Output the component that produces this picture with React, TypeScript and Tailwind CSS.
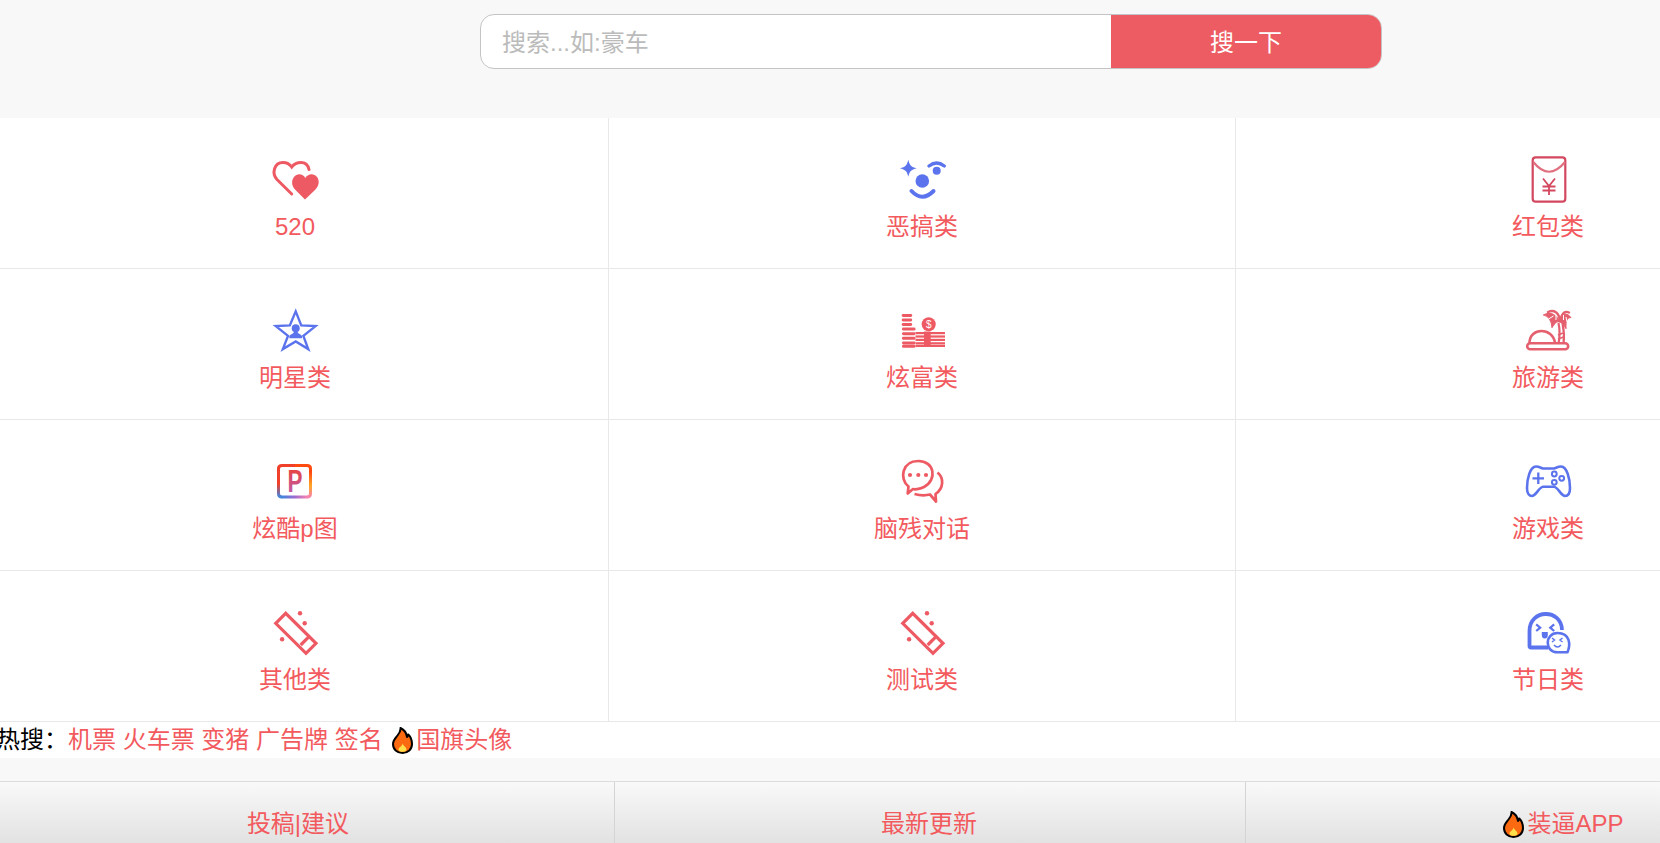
const BLUE = "#5b73ec";
const RED = "#ee5a63";

function Svg({ children }: { children: React.ReactNode }) {
  return (
    <svg width="48" height="48" viewBox="0 0 48 48" fill="none">
      {children}
    </svg>
  );
}

function HeartIcon() {
  return (
    <Svg>
      <path d="M20.7 39 L6 24.5 C0.5 18.5 3 7.5 12 7.5 C16 7.5 19 9.5 20.7 12 C23 9 26 7.5 30 7.5 C34 7.5 37 10 38 14.5" stroke={RED} strokeWidth="3" strokeLinecap="round" />
      <path d="M34 44.5 L24.5 35 C20 30.5 20.5 25 23 22 C26 18 32 18.5 34.3 23 C37 18.5 43 18 46 22 C48.5 25 48.5 30.5 44 35 Z" fill={RED} />
    </Svg>
  );
}

function ClownIcon() {
  return (
    <Svg>
      <path d="M10.3 4.8 C11.5 10 13 12.2 18.8 13.3 C13 14.6 11.5 16.6 10.3 21.8 C9.1 16.6 7.6 14.6 1.8 13.3 C7.6 12.2 9.1 10 10.3 4.8 Z" fill={BLUE} />
      <circle cx="24.3" cy="26" r="6.8" fill={BLUE} />
      <circle cx="38.7" cy="15.7" r="4" fill={BLUE} />
      <path d="M31 11 Q38.7 5 46.3 11" stroke={BLUE} strokeWidth="3.2" strokeLinecap="round" />
      <path d="M13.5 36 Q24.3 47.5 35.5 36" stroke={BLUE} strokeWidth="4" strokeLinecap="round" />
    </Svg>
  );
}

function PacketIcon() {
  return (
    <Svg>
      <rect x="8.7" y="2.3" width="32.6" height="44.4" rx="3" stroke="#d3475f" strokeWidth="2.2" />
      <path d="M9.3 7 Q25 26.5 41 7" stroke="#e0707f" strokeWidth="2.2" />
      <path d="M19 23.5 L25 31 L31 23.5 M18.5 31.5 H31.5 M18.5 35.5 H31.5 M25 31 V40" stroke="#d3475f" strokeWidth="1.8" />
    </Svg>
  );
}

function StarIcon() {
  return (
    <Svg>
      <g transform="translate(2 2.6) scale(0.92)">
        <path d="M24.7 3 L30.7 18.3 L46.3 19 L33 29.7 L38.3 44 L24.7 35.7 L10.7 44 L16.3 29.7 L3 19 L18.3 18.3 Z" stroke={BLUE} strokeWidth="2.6" />
      </g>
      <circle cx="24.7" cy="22.3" r="4" fill={BLUE} />
      <path d="M18.3 32.3 V30 C20 28 22 28 23 26 H26.5 C27.5 28 29.5 28 31 30 V32.3 Z" fill={BLUE} />
    </Svg>
  );
}

function CoinsIcon() {
  const left = [8, 12.5, 17, 21.6, 26.2, 30.8, 35.4, 38.8];
  const right = [26, 29.4, 32.8, 36.2, 38.8];
  return (
    <Svg>
      {left.map((y, i) => (
        <rect key={y} x={i < 3 ? 3.7 : 4} y={y} width={i < 3 ? 10.5 : 13.5} height="3" rx="1.4" fill={RED} />
      ))}
      <circle cx="30.7" cy="18.3" r="7" fill={RED} />
      <text x="30.7" y="22" textAnchor="middle" fontSize="10" fill="#fff" fontFamily="Liberation Sans, sans-serif">$</text>
      {right.map((y) => (
        <rect key={y} x="17.5" y={y} width="29.5" height="2.2" fill={RED} />
      ))}
      <rect x="26" y="25.5" width="6.7" height="15.5" fill={RED} />
    </Svg>
  );
}

function PalmIcon() {
  const c = "#e5606f";
  return (
    <Svg>
      <rect x="3.2" y="37.3" width="41" height="6" rx="3" stroke={c} strokeWidth="2.6" />
      <path d="M5.5 37 C5.5 21 29 21 31 37" stroke={c} strokeWidth="2.6" />
      <path d="M34.5 38 C36 30 36 24 34.5 17 M39.5 38 C40.5 30 40 24 38.5 17" stroke={c} strokeWidth="2.2" />
      <path d="M36 16 C31 7 25 6 19.5 9 C25 10 27.5 14 28 21.5 C30.5 16.5 33 14.5 36 16 Z" fill={c} stroke={c} strokeWidth="1.2" strokeLinejoin="round" />
      <path d="M36 16 C37 8 42 5.5 46.8 11.5 C42.5 11.5 41.5 15 42 22.5 C40 18.5 38 16.5 36 16 Z" fill={c} stroke={c} strokeWidth="1.2" strokeLinejoin="round" />
      <path d="M24 6 C30 3.5 35 6 36 15 C38 7 41 4.5 45 6.5" stroke={c} strokeWidth="2.4" strokeLinecap="round" />
      <path d="M24.5 13 L29.5 10 M32 14 L32 9 M39.5 14 L39.5 9 M43 16 L42 11" stroke="#fff" strokeWidth="1" />
      <path d="M34 29 L39 27 M34 33 L39.5 31" stroke={c} strokeWidth="1.6" />
    </Svg>
  );
}

function PhotoIcon() {
  return (
    <Svg>
      <defs>
        <linearGradient id="pLeft" x1="0" y1="0" x2="0" y2="1">
          <stop offset="0.35" stopColor="#f0402a" />
          <stop offset="1" stopColor="#3f86e0" />
        </linearGradient>
        <linearGradient id="pRight" x1="0" y1="0" x2="0" y2="1">
          <stop offset="0" stopColor="#ff4a10" />
          <stop offset="0.55" stopColor="#ffa526" />
          <stop offset="1" stopColor="#f884b0" />
        </linearGradient>
        <linearGradient id="pBottom" x1="0" y1="0" x2="1" y2="0">
          <stop offset="0" stopColor="#3f86e0" />
          <stop offset="0.5" stopColor="#9a6bd0" />
          <stop offset="1" stopColor="#f884b0" />
        </linearGradient>
        <linearGradient id="pLetter" x1="0" y1="0" x2="0" y2="1">
          <stop offset="0" stopColor="#f0402a" />
          <stop offset="1" stopColor="#b45fc4" />
        </linearGradient>
      </defs>
      <path d="M7.5 24 V11.5 Q7.5 8.5 11 8.5 H24" stroke="#f0402a" strokeWidth="3" />
      <path d="M24 8.5 H36 Q39.5 8.5 39.5 11.5 V24" stroke="#ff4a10" strokeWidth="3" />
      <path d="M7.5 20 V36.5 Q7.5 40 11 40" stroke="url(#pLeft)" strokeWidth="3" />
      <path d="M39.5 15 V36.5 Q39.5 40 36 40" stroke="url(#pRight)" strokeWidth="3" />
      <rect x="10.5" y="38.5" width="26" height="3" fill="url(#pBottom)" />
      <text x="24" y="35" textAnchor="middle" fontSize="31" fontWeight="700" fontFamily="Liberation Sans, sans-serif" fill="url(#pLetter)" textLength="15" lengthAdjust="spacingAndGlyphs">P</text>
    </Svg>
  );
}

function ChatIcon() {
  return (
    <Svg>
      <path d="M9.7 36.5 L10.5 29.5 C1 22 4 4 20.3 4 C36 4 40 22 26 30 C21 32.5 16 32.5 15 32 Z" stroke={RED} strokeWidth="2.7" strokeLinejoin="round" />
      <path d="M16.5 37 C22 38.5 28 38.5 32 37.5 L38 44.5 L37.5 37 C46 31 46 21 39.5 15.5" stroke={RED} strokeWidth="2.7" strokeLinejoin="round" />
      <circle cx="12" cy="18" r="2.1" fill={RED} />
      <circle cx="20.3" cy="18" r="2.1" fill={RED} />
      <circle cx="28" cy="18" r="2.1" fill={RED} />
    </Svg>
  );
}

function GameIcon() {
  return (
    <Svg>
      <path d="M12 9.5 C15 9.5 17 11 19 11.5 H30 C32 11 34 9.5 37 9.5 C43 9.5 46 22 46 31 C46 37 43.5 39 41 39 C37 39 34 30 30 29.7 H19 C15 30 12 39 8 39 C5.5 39 3 37 3 31 C3 22 6 9.5 12 9.5 Z" stroke={BLUE} strokeWidth="2.6" strokeLinejoin="round" />
      <path d="M14.3 15.5 V27 M8.5 21.3 H20" stroke={BLUE} strokeWidth="2.3" />
      <circle cx="30.3" cy="17" r="2.4" stroke={BLUE} strokeWidth="2" />
      <circle cx="37.7" cy="21.3" r="2.4" stroke={BLUE} strokeWidth="2" />
      <circle cx="30.3" cy="25.3" r="2.4" stroke={BLUE} strokeWidth="2" />
    </Svg>
  );
}

function WandIcon() {
  return (
    <Svg>
      <path d="M4.7 15.3 L14.7 5.3 L45 35.3 L35 45.3 Z" stroke={RED} strokeWidth="3.2" />
      <path d="M29.7 37 L39 27.7" stroke={RED} strokeWidth="3.2" />
      <circle cx="29" cy="5.3" r="2.2" fill={RED} />
      <circle cx="33.7" cy="15.3" r="2.2" fill={RED} />
      <circle cx="11.1" cy="31.3" r="2.2" fill={RED} />
    </Svg>
  );
}

function GhostIcon() {
  return (
    <Svg>
      <g transform="translate(-1.5 0)">
        <path d="M26 39.5 H8.5 Q7 39.5 7 38 V23 C7 0.5 39 0.5 39.5 22" stroke={BLUE} strokeWidth="3.8" />
        <path d="M13.7 16.3 L17.7 19.7 L13.7 23 M31.7 16.3 L27.7 19.7 L31.7 23" stroke={BLUE} strokeWidth="2.2" />
        <path d="M19.3 24 H25.3 V27 Q25.3 30.5 22.3 30.5 Q19.3 30.5 19.3 27 Z" fill={BLUE} />
        <path d="M45 44.3 H35 C22 44.3 22 25 35 25 C48 25 48 37 45 44.3 Z" fill="#fff" stroke={BLUE} strokeWidth="2.6" strokeLinejoin="round" />
        <path d="M29.5 30 L32 32 L29.5 34 M40 30 L37.5 32 L40 34" stroke={BLUE} strokeWidth="1.5" />
        <path d="M31.5 37 Q35 41 38.5 37" stroke={BLUE} strokeWidth="1.5" />
      </g>
    </Svg>
  );
}

function Flame() {
  return (
    <svg width="21" height="27" viewBox="0 0 21 27" className="inline-block align-[-6px]">
      <path d="M8.5 1 C13 3 14.5 6 15 10 C15.8 9.3 16.2 8.5 16.3 7.5 C18.8 10 20 13 20 17 C20 22.5 16 26 10.5 26 C5 26 1 22.5 1 17 C1 13 3.5 11 5.5 8.5 C7.5 6 9 4 8.5 1 Z" fill="#fb6a10" stroke="#000" strokeWidth="2" strokeLinejoin="round" />
      <path d="M10.8 16.5 C11 19 14.5 20 14.5 22.5 C14.5 24 12.5 24.8 10.5 24.8 C8.5 24.8 6.5 24 6.5 22.5 C6.5 20.5 9.8 19.5 10.8 16.5 Z" fill="#ffe04a" />
    </svg>
  );
}

const items = [
  { label: "520", icon: <HeartIcon /> },
  { label: "恶搞类", icon: <ClownIcon /> },
  { label: "红包类", icon: <PacketIcon /> },
  { label: "明星类", icon: <StarIcon /> },
  { label: "炫富类", icon: <CoinsIcon /> },
  { label: "旅游类", icon: <PalmIcon /> },
  { label: "炫酷p图", icon: <PhotoIcon /> },
  { label: "脑残对话", icon: <ChatIcon /> },
  { label: "游戏类", icon: <GameIcon /> },
  { label: "其他类", icon: <WandIcon /> },
  { label: "测试类", icon: <WandIcon /> },
  { label: "节日类", icon: <GhostIcon /> },
];

const hot = ["机票", "火车票", "变猪", "广告牌", "签名"];

export default function App() {
  return (
    <div className="h-[843px] overflow-hidden bg-[#f8f8f8] font-['Liberation_Sans','Noto_Sans_CJK_SC',sans-serif] text-[24px] text-[#f25a5e]">
      <div className="h-[118px] pt-[14px] pl-[480px]">
        <form className="flex h-[55px] w-[902px] overflow-hidden rounded-[14px] border border-[#c4c4c4] bg-white">
          <input
            placeholder="搜索...如:豪车"
            className="min-w-0 flex-1 pt-[2px] pl-[21px] text-[24px] outline-none placeholder:text-[#bbbbbb]"
          />
          <button type="button" className="w-[270px] bg-[#ec5c62] pt-[2px] text-[24px] text-white">
            搜一下
          </button>
        </form>
      </div>

      <div className="-ml-[18px] grid w-[1879px] grid-cols-[627px_627px_625px] bg-white">
        {items.map((item) => (
          <a
            key={item.label}
            className="flex h-[151px] flex-col items-center border-r border-b border-[#e8e8e8] pt-[37px]"
          >
            {item.icon}
            <span className="leading-[47px]">{item.label}</span>
          </a>
        ))}
      </div>

      <div className="h-[36px] whitespace-pre bg-white -indent-[4px] leading-[36px]">
        <span className="text-black">热搜：</span>
        {hot.map((h) => (
          <a key={h}>{h} </a>
        ))}
        <a className="ml-[3px]">
          <Flame />
          <span className="ml-[3px]">国旗头像</span>
        </a>
      </div>

      <div className="mt-[23px] -ml-[16px] grid h-[86px] w-[1893px] grid-cols-[repeat(3,631px)] border-t border-[#dddddd] bg-gradient-to-b from-[#f9f9f9] to-[#d9d9d9]">
        <a className="border-r border-[#d4d4d4] pt-[25px] pr-[2px] text-center leading-[34px]">投稿|建议</a>
        <a className="border-r border-[#d4d4d4] pt-[25px] pr-[2px] text-center leading-[34px]">最新更新</a>
        <a className="pt-[25px] pl-[4px] text-center leading-[34px]">
          <Flame />
          <span className="ml-[3px]">装逼APP</span>
        </a>
      </div>
    </div>
  );
}
